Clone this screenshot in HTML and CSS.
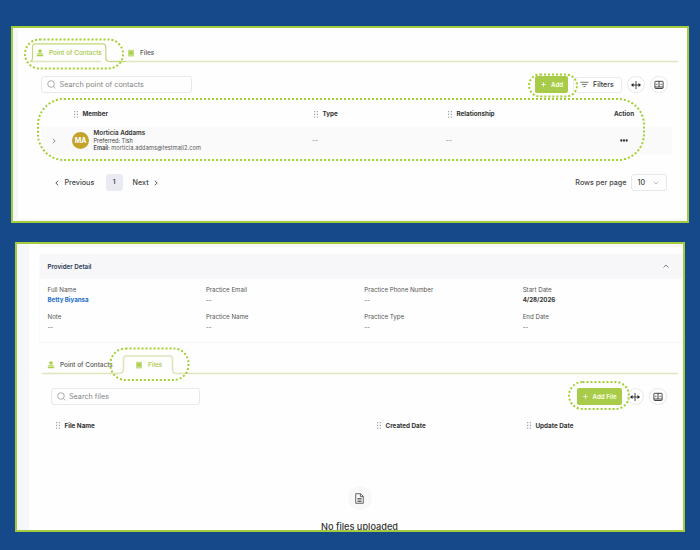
FILE: index.html
```html
<!DOCTYPE html>
<html lang="en">
<head>
<meta charset="utf-8">
<title>Provider contacts and files</title>
<link rel="stylesheet" href="styles.css">
</head>
<body>
<svg class="defs" width="0" height="0">
  <symbol id="person" viewBox="0 0 8 8"><circle cx="4" cy="2" r="1.8"/><path d="M1.300 4.300h5.400v1H1.300zM.8 5.800h6.400v1.500H.8z"/></symbol>
  <symbol id="doc" viewBox="0 0 8 8"><rect x="1" y=".8" width="6" height="6.8" rx=".8" opacity=".7"/><path d="M2.2 3h3.600M2.200 4.500h3.600" stroke="#8db52c" stroke-width=".6"/></symbol>
  <symbol id="search" viewBox="0 0 9 9"><circle cx="4" cy="4" r="3.3"/><path d="M6.4 6.4 8.3 8.4"/></symbol>
  <symbol id="grip" viewBox="0 0 4 7"><path d="M0 0h1.2v1.3H0zM2.8 0H4v1.3H2.8zM0 2.7h1.2V4H0zM2.8 2.7H4V4H2.8zM0 5.4h1.2v1.3H0zM2.8 5.4H4v1.3H2.8z"/></symbol>
  <symbol id="plus" viewBox="0 0 5 5"><path d="M2.5 .3v4.4M.3 2.5h4.4"/></symbol>
  <symbol id="split" viewBox="0 0 10 10"><path d="M5 1v8M.8 5h8.4"/><path d="M0 5 2.5 3v4zM10 5 7.500 3v4z" fill="#222" stroke="none"/></symbol>
  <symbol id="columns" viewBox="0 0 10 10"><rect x=".9" y="1.300" width="8.200" height="7.200" rx=".7"/><path d="M5 1.300v5.700M1 7h8"/><path d="M2.200 4.300h1.300M6.500 4.300h1.300"/></symbol>
  <symbol id="right" viewBox="0 0 4 6"><path d="M.8 .8 3.200 3 .8 5.200"/></symbol>
  <symbol id="left" viewBox="0 0 4 6"><path d="M3.200 .8 .8 3l2.400 2.200"/></symbol>
</svg>

<main class="stage">
  <section class="panel contacts">
    <div class="body">
      <nav class="tabs">
        <svg class="tabline" viewBox="0 0 652 20"><path class="soft" d="M1 18.500h70M80 18.500H650"/><path d="M0 18.500Q2.500 18.500 2.500 14.500V4Q2.500 .8 5.500 .8H73Q76 .8 76 4v10.500q0 4 4 4h16"/></svg>
        <span class="tab on"><svg><use href="#person"/></svg>Point of Contacts</span>
        <span class="tab"><svg><use href="#doc"/></svg>Files</span>
      </nav>
      <div class="toolbar">
        <div class="search"><svg><use href="#search"/></svg>Search point of contacts</div>
        <button class="add"><svg><use href="#plus"/></svg>Add</button>
        <button class="filters"><svg viewBox="0 0 10 7"><path d="M.5 1h9M2 3.400h6M3.800 5.800h2.400"/></svg>Filters</button>
        <button class="round"><svg><use href="#split"/></svg></button>
        <button class="round"><svg><use href="#columns"/></svg></button>
      </div>
      <div class="row head">
        <span class="c-member"><svg class="grip"><use href="#grip"/></svg>Member</span>
        <span><svg class="grip"><use href="#grip"/></svg>Type</span>
        <span><svg class="grip"><use href="#grip"/></svg>Relationship</span>
        <span class="c-action">Action</span>
      </div>
      <div class="row record">
        <div class="who">
          <svg class="chev"><use href="#right"/></svg>
          <i class="avatar">MA</i>
          <div><p class="name">Morticia Addams</p><p class="pref">Preferred: Tish</p><p class="mail">Email: <span>morticia.addams@testmail2.com</span></p></div>
        </div>
        <span>--</span><span>--</span>
        <span class="c-more"><svg viewBox="0 0 8 3"><circle cx="1.300" cy="1.500" r="1.150"/><circle cx="4" cy="1.500" r="1.150"/><circle cx="6.700" cy="1.500" r="1.150"/></svg></span>
      </div>
      <div class="pager">
        <svg class="chev dark"><use href="#left"/></svg><span class="prev">Previous</span>
        <b class="page">1</b><span class="next">Next</span><svg class="chev dark"><use href="#right"/></svg>
        <span class="rpp">Rows per page</span>
        <span class="select">10<svg viewBox="0 0 6 4"><path d="M.5 .5 3 3 5.500 .5"/></svg></span>
      </div>
    </div>
  </section>

  <section class="panel files">
    <div class="body">
      <div class="above"></div>
      <div class="card">
        <header>Provider Detail<svg viewBox="0 0 6 4"><path d="M.5 3.500 3 1 5.500 3.500"/></svg></header>
        <dl>
          <div><dt>Full Name</dt><dd class="link">Betty Biyansa</dd></div>
          <div><dt>Practice Email</dt><dd>--</dd></div>
          <div><dt>Practice Phone Number</dt><dd>--</dd></div>
          <div><dt>Start Date</dt><dd class="strong">4/28/2026</dd></div>
          <div><dt>Note</dt><dd>--</dd></div>
          <div><dt>Practice Name</dt><dd>--</dd></div>
          <div><dt>Practice Type</dt><dd>--</dd></div>
          <div><dt>End Date</dt><dd>--</dd></div>
        </dl>
      </div>
      <nav class="tabs">
        <svg class="tabline" viewBox="0 0 636 20"><path class="soft" d="M0 18.500H76M136 18.500H636"/><path class="soft" d="M74 18.500h2Q81.500 18.500 81.500 14V4Q81.500 1 84.500 1H127.500Q130.500 1 130.500 4v10.500q0 4 4 4h4"/></svg>
        <span class="tab"><svg><use href="#person"/></svg>Point of Contacts</span>
        <span class="tab on"><svg><use href="#doc"/></svg>Files</span>
      </nav>
      <div class="toolbar">
        <div class="search"><svg><use href="#search"/></svg>Search files</div>
        <button class="add"><svg><use href="#plus"/></svg>Add File</button>
        <button class="round"><svg><use href="#split"/></svg></button>
        <button class="round"><svg><use href="#columns"/></svg></button>
      </div>
      <div class="row head">
        <span><svg class="grip"><use href="#grip"/></svg>File Name</span>
        <span><svg class="grip"><use href="#grip"/></svg>Created Date</span>
        <span><svg class="grip"><use href="#grip"/></svg>Update Date</span>
      </div>
      <div class="empty">
        <i><svg viewBox="0 0 10 12"><path d="M.8 .7h5.400L9.200 3.700v7.600H.8zM6 .8v3.100h3.100M2.700 6h4.600M2.700 7.700h4.600M2.700 9.400h4.600"/></svg></i>
        <p>No files uploaded</p>
      </div>
    </div>
  </section>

  <svg class="marks" viewBox="0 0 700 550">
    <rect x="25" y="39.500" width="98" height="29" rx="14.500"/>
    <rect x="529" y="74.500" width="48" height="22" rx="11"/>
    <rect x="38" y="99" width="606" height="61" rx="26"/>
    <rect x="110.500" y="348.500" width="78" height="31.500" rx="15"/>
    <rect x="569" y="382" width="60" height="27" rx="13.500"/>
  </svg>
</main>
</body>
</html>
```

FILE: styles.css
```css
* { box-sizing: border-box; }
body { margin: 0; background: #16498a; font-family: Inter, "Liberation Sans", sans-serif; color: #444; }
p, dl, dd { margin: 0; }
svg { fill: none; flex: none; display: block; overflow: visible; }
.defs { position: absolute; }
.stage { position: relative; width: 700px; height: 550px; padding: 26px 0 0 11px; overflow: hidden; }
.panel { border: 2px solid #a3cb3b; background: #f6f7fb; overflow: hidden; }
.body { background: #fefefe; height: 100%; }
.contacts { width: 678px; height: 196.500px; padding: 0 0 2px 5px; }
.files { width: 670px; height: 290px; margin: 19.500px 0 0 4px; padding-left: 11.500px; }

.tabs { position: relative; display: flex; height: 20px; align-items: center; font-size: 6.400px; color: #555; font-weight: 500; white-space: nowrap; }
.tabline { position: absolute; inset: 0; width: 100%; height: 20px; stroke: #bfd878; stroke-width: 1.200; }
.tabline .soft { stroke: #dfe5bd; stroke-width: 1.600; }
.tab { position: relative; display: flex; align-items: center; }
.tab svg { width: 8px; height: 8px; fill: #a9cf49; }
.tab.on { color: #a5c944; }

.toolbar { display: flex; align-items: center; }
button { font: inherit; padding: 0; display: flex; align-items: center; white-space: nowrap; flex: none; }
.search { display: flex; align-items: center; border: 1px solid #e8e8ea; border-radius: 3px; color: #858585; margin-right: auto; }
.search svg { width: 9px; height: 9px; stroke: #999; stroke-width: .8; }
.add { background: #a8cc49; color: #fbffe9; border: 0; border-radius: 2px; font-size: 6.200px; font-weight: 600; }
.add svg { width: 5px; height: 5px; stroke: #fff; stroke-width: .8; }
.filters { width: 49px; height: 16px; border: 1px solid #ececee; border-radius: 3px; background: #fff; font-size: 7px; color: #333; font-weight: 500; }
.filters svg { width: 9px; height: 7px; stroke: #555; stroke-width: .9; margin: 0 4px 0 6.500px; }
.round { width: 17.500px; height: 17.500px; border: 1px solid #e8e8ea; border-radius: 50%; background: #fff; justify-content: center; }
.round svg { width: 10px; height: 10px; stroke: #333; stroke-width: .9; }
.row { display: grid; align-items: center; }
.head { font-size: 6.300px; font-weight: 700; color: #333; }
.head span { display: flex; align-items: center; }
.grip { width: 4px; height: 7px; fill: #a2a2ad; }
.chev { width: 4px; height: 6px; stroke: #777; stroke-width: .8; }
.dark { stroke: #333; }

.contacts .body { padding: 14.500px 7px 0 12px; }
.contacts .tab:first-of-type { margin-left: 6px; width: 91px; }
.contacts .tab svg { margin-right: 5px; }
.contacts .toolbar { margin: 13px 12.500px 0 11px; height: 18px; }
.contacts .search { width: 151px; height: 17.500px; font-size: 7.300px; padding-left: 5px; }
.contacts .search svg { margin-right: 3.500px; }
.contacts .add { width: 33px; height: 17.500px; padding-left: 6px; margin-right: 5px; }
.contacts .add svg { margin-right: 5.500px; }
.contacts .round { margin-left: 5.500px; }
.contacts .row { grid-template-columns: 271px 134px 1fr 64px; margin: 0 8px 0 11px; }
.contacts .head { height: 25px; margin-top: 8px; }
.contacts .head .grip { margin: 0 4.500px 0 2px; }
.contacts .head .c-member .grip { margin-left: 33px; }
.c-action { padding-left: 6px; }
.contacts .record { height: 28.500px; background: #fafafa; font-size: 6.500px; color: #777; }
.who { display: flex; align-items: center; padding-left: 11px; }
.avatar { width: 17px; height: 17px; border-radius: 50%; background: #c4a32a; color: #fff; font: 700 7px/17px Inter, sans-serif; text-align: center; margin: 0 4.500px 0 16px; }
.name { font-size: 6.300px; line-height: 9px; font-weight: 600; color: #333; }
.pref, .mail { font-size: 5.600px; line-height: 7.500px; color: #444; }
.mail { font-weight: 600; }
.mail span { font-weight: 400; color: #555; letter-spacing: .12px; }
.c-more { padding-left: 12px; }
.c-more svg { width: 8px; height: 3px; fill: #333; }
.pager { display: flex; align-items: center; height: 18px; margin: 18.500px 13px 0 25px; font-size: 7.200px; color: #444; font-weight: 500; }
.prev { width: 46.500px; padding-left: 5.500px; }
.page { width: 17px; height: 17px; background: #eaeaf3; border-radius: 3px; text-align: center; font-size: 6.500px; line-height: 17px; font-weight: 600; }
.next { width: 31.500px; padding-left: 10px; }
.rpp { margin: 0 4px 0 auto; }
.select { width: 36.500px; height: 17px; border: 1px solid #e8e8ea; border-radius: 3px; display: flex; align-items: center; padding: 0 7px 0 6px; justify-content: space-between; }
.select svg { width: 6px; height: 4px; stroke: #aaa; stroke-width: .8; }

.above { height: 3px; margin-left: 10px; background: #f7f7f8; }
.card { margin: 7px 0 0 10px; height: 88.500px; border-left: 1px solid #fafafa; border-bottom: 1px solid #f7f7f7; }
.card header { display: flex; align-items: center; justify-content: space-between; height: 25px; background: #f7f7fa; padding: 0 14px 1px 8px; font-size: 6.200px; font-weight: 600; color: #263550; }
.card header svg { width: 6px; height: 4px; stroke: #666; stroke-width: .8; }
.card dl { display: grid; grid-template-columns: repeat(4, 158.400px); grid-auto-rows: 27px; padding: 5.500px 0 0 8px; font-size: 6.150px; color: #555; }
.card dt { line-height: 10px; }
.card dd { line-height: 10px; }
.card .link { color: #1e6fca; font-weight: 700; }
.card .strong { color: #333; font-weight: 700; }
.files .tabs { margin: 12.500px 5px 0 13.500px; }
.files .tab:first-of-type { margin-left: 5px; width: 88px; }
.files .tab svg { margin-right: 5px; }
.files .toolbar { margin: 12.500px 16.500px 0 22.500px; height: 18px; }
.files .search { width: 148.500px; height: 17px; font-size: 7.200px; padding-left: 5px; }
.files .search svg { margin-right: 3px; }
.files .add { width: 44.500px; height: 17px; padding-left: 6px; }
.files .add svg { margin-right: 4.500px; }
.files .round { margin-left: 5px; }
.files .row { grid-template-columns: 321px 150px 1fr; margin: 8.500px 0 0 27.500px; height: 23px; }
.files .head .grip { margin-right: 4.500px; }
.empty { display: flex; flex-direction: column; align-items: center; margin: 49px 0 0 7px; width: 648px; }
.empty i { width: 24px; height: 24px; border-radius: 50%; background: #f8f8f8; display: grid; place-items: center; }
.empty svg { width: 9px; height: 11px; stroke: #444; stroke-width: .9; }
.empty p { font-size: 9.200px; line-height: 12px; margin-top: 10.500px; font-weight: 500; color: #333; }

.marks { position: absolute; inset: 0; width: 700px; height: 550px; }
.marks rect { stroke: #a3cf34; stroke-width: 2; stroke-dasharray: 2 2; }
```
